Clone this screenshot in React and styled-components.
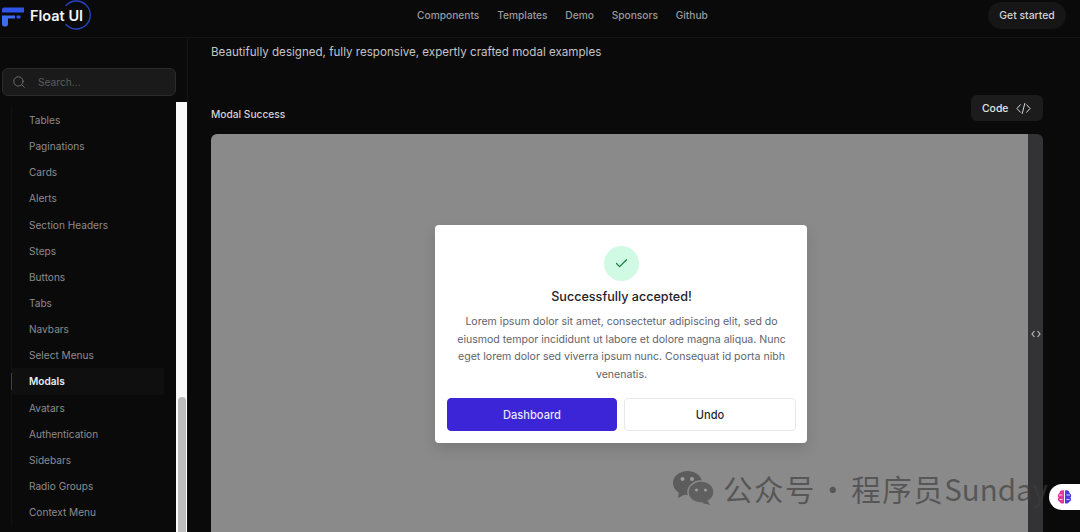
import React from "react";
import styled, { createGlobalStyle } from "styled-components";
import { Search, Check } from "lucide-react";

const GlobalStyle = createGlobalStyle`
  html, body {
    margin: 0;
    padding: 0;
    background: #0a0a0b;
  }
  * {
    box-sizing: border-box;
  }
`;

const Page = styled.div`
  position: relative;
  width: 1080px;
  height: 532px;
  overflow: hidden;
  background: #0a0a0b;
  font-family: Inter, "Liberation Sans", sans-serif;
`;

const Header = styled.header`
  display: grid;
  grid-template-columns: 200px 1fr 200px;
  align-items: start;
  height: 38px;
  padding-right: 14px;
  border-bottom: 1px solid #141415;
`;

const Brand = styled.div`
  position: relative;
  display: flex;
  align-items: center;
  gap: 5px;
  height: 31px;
  padding-left: 2px;
`;

const BrandName = styled.span`
  font-size: 14.5px;
  font-weight: 600;
  color: #f4f4f4;
`;

const BrandRing = styled.svg`
  position: absolute;
  left: 62px;
  top: -1px;
`;

const Nav = styled.nav`
  display: flex;
  justify-content: center;
  gap: 17.8px;
  height: 30px;
  align-items: center;
  padding-left: 59px;
`;

const NavLink = styled.span`
  font-size: 10.2px;
  font-weight: 500;
  color: #9a9a9c;
`;

const GetStarted = styled.div`
  justify-self: end;
  display: flex;
  align-items: center;
  justify-content: center;
  width: 78px;
  height: 27px;
  margin-top: 2px;
  border-radius: 14px;
  background: #161617;
  font-size: 10.4px;
  font-weight: 500;
  color: #d4d4d4;
`;

const Body = styled.div`
  display: flex;
  height: 494px;
`;

const Sidebar = styled.aside`
  position: relative;
  display: flex;
  flex-direction: column;
  width: 176px;
  flex: none;
  padding-top: 30px;
`;

const SearchBox = styled.div`
  display: flex;
  align-items: center;
  gap: 12px;
  height: 28px;
  margin-left: 2px;
  padding-left: 9px;
  border: 1px solid #2b2b2d;
  border-radius: 6px;
  background: #1a1a1b;
  font-size: 10.2px;
  color: #5c5c5e;
`;

const SideList = styled.ul`
  list-style: none;
  margin: 11px 0 0 11px;
  padding: 0;
  border-left: 1px solid #111112;
`;

const SideItem = styled.li`
  position: relative;
  display: flex;
  align-items: center;
  height: 26.15px;
  margin-right: 12px;
  padding-left: 17px;
  font-size: 10.1px;
  font-weight: ${(p) => (p.$active ? 600 : 400)};
  color: ${(p) => (p.$active ? "#ececec" : "#8c8c8c")};
  background: ${(p) => (p.$active ? "#0f0f10" : "transparent")};

  &::before {
    content: "";
    display: ${(p) => (p.$active ? "block" : "none")};
    position: absolute;
    left: -1px;
    top: 5px;
    bottom: 5px;
    width: 1px;
    background: #3a2bb8;
  }
`;

const ScrollTrack = styled.div`
  flex: none;
  width: 11px;
  height: 430px;
  margin-top: 64px;
  padding: 295px 1px 0 2px;
  background: #fafafa;
`;

const ScrollThumb = styled.div`
  height: 100%;
  border-radius: 4px 4px 0 0;
  background: #bdbdbd;
`;

const Main = styled.main`
  flex: 1;
  min-width: 0;
  padding: 7px 37px 0 23px;
  border-left: 1px solid #141415;
`;

const Lead = styled.p`
  margin: 0;
  font-size: 11.6px;
  line-height: 15px;
  color: #c4c4c6;
`;

const SectionBar = styled.div`
  display: flex;
  justify-content: space-between;
  align-items: flex-end;
  height: 26px;
  margin-top: 35px;
`;

const SectionTitle = styled.h3`
  margin: 0;
  font-size: 10.2px;
  line-height: 14px;
  font-weight: 500;
  color: #d4d4d6;
`;

const CodeButton = styled.div`
  display: flex;
  align-items: center;
  gap: 8px;
  height: 26px;
  width: 72px;
  padding-left: 11px;
  border-radius: 6px;
  background: #1c1c1d;
  font-size: 10.4px;
  font-weight: 500;
  color: #e4e4e4;
`;

const Preview = styled.div`
  display: flex;
  height: 400px;
  margin-top: 13px;
  border-radius: 6px 6px 0 0;
  overflow: hidden;
`;

const Stage = styled.div`
  flex: 1;
  display: flex;
  align-items: center;
  justify-content: center;
  padding-left: 3px;
  background: #8a8a8a;
`;

const Handle = styled.div`
  flex: none;
  display: flex;
  align-items: center;
  justify-content: center;
  width: 15px;
  background: #333335;
  color: #c4c4c4;
`;

const Modal = styled.div`
  width: 372px;
  height: 218px;
  padding: 21px 11px 0 12px;
  border-radius: 4px;
  background: #fff;
  box-shadow: 0 6px 14px rgba(0, 0, 0, 0.12);
  text-align: center;
`;

const IconCircle = styled.div`
  display: flex;
  align-items: center;
  justify-content: center;
  width: 35px;
  height: 35px;
  margin: 0 auto;
  border-radius: 50%;
  background: #d1fae5;
  color: #16803d;
`;

const ModalTitle = styled.h4`
  margin: 7px 0 0;
  font-size: 12.6px;
  line-height: 17px;
  font-weight: 500;
  color: #1f2329;
`;

const ModalText = styled.p`
  margin: 8px 0 0;
  font-size: 10.55px;
  line-height: 17.6px;
  color: #5f636b;
`;

const Actions = styled.div`
  display: grid;
  grid-template-columns: 170px 172px;
  gap: 7px;
  margin-top: 15px;
`;

const ActionButton = styled.div`
  display: flex;
  align-items: center;
  justify-content: center;
  height: 33px;
  border-radius: 4px;
  border: 1px solid ${(p) => (p.$primary ? "#3b25d6" : "#e8e8ea")};
  background: ${(p) => (p.$primary ? "#3b25d6" : "#fff")};
  color: ${(p) => (p.$primary ? "#e8e6fb" : "#26282c")};
  font-size: 11.1px;
  font-weight: 450;
`;

const Watermark = styled.div`
  position: absolute;
  left: 672px;
  top: 468px;
  display: flex;
  align-items: center;
  gap: 7px;
  color: rgba(60, 60, 60, 0.66);
  font-family: "Noto Sans CJK SC", "Noto Sans", sans-serif;
  font-size: 29.5px;
  line-height: 40px;
  letter-spacing: 1.5px;
  word-spacing: -6px;
  white-space: nowrap;
`;

const WatermarkLatin = styled.span`
  letter-spacing: 0;
`;

const BrainBadge = styled.div`
  position: absolute;
  right: 0;
  top: 484px;
  display: flex;
  align-items: center;
  justify-content: center;
  width: 31px;
  height: 26px;
  border-radius: 13px 0 0 13px;
  background: #fff;
`;

const navItems = ["Components", "Templates", "Demo", "Sponsors", "Github"];
const sideItems = [
  "Tables",
  "Paginations",
  "Cards",
  "Alerts",
  "Section Headers",
  "Steps",
  "Buttons",
  "Tabs",
  "Navbars",
  "Select Menus",
  "Modals",
  "Avatars",
  "Authentication",
  "Sidebars",
  "Radio Groups",
  "Context Menu",
];

const CodeIcon = ({ size, width }) => (
  <svg width={size} height={size} viewBox="0 0 24 24" fill="none" stroke="currentColor" strokeWidth={width} strokeLinecap="round" strokeLinejoin="round">
    <path d="M7 6 1.5 12 7 18" />
    <path d="M17 6l5.5 6-5.5 6" />
    <path d="M14 4 10 20" />
  </svg>
);

const SmallCode = () => (
  <svg width="10" height="8" viewBox="0 0 10 8" fill="none" stroke="currentColor" strokeWidth="1.1">
    <path d="M3.4 1 1 4l2.4 3" />
    <path d="M6.6 1 9 4 6.6 7" />
  </svg>
);

const Logo = () => (
  <svg width="23" height="22" viewBox="0 0 23 22">
    <path d="M0 4.5a2 2 0 0 1 2-2H22v5H0z" fill="#2f55e8" />
    <path d="M0 10.5h13v3H6v5.500a2.500 2.500 0 0 1-2.500 2.500h-1A2.500 2.500 0 0 1 0 19z" fill="#3f6bf2" />
    <rect x="14.500" y="10.500" width="4" height="3" rx="1" fill="#2f55e8" />
  </svg>
);

const WeChat = () => (
  <svg width="44" height="36" viewBox="0 0 44 36">
    <ellipse cx="15.500" cy="13" rx="14.500" ry="12" fill="#5c5c5c" />
    <path d="M7 21l-1 7 8-4z" fill="#5c5c5c" />
    <ellipse cx="29" cy="22" rx="13" ry="11" fill="#5f5f5f" stroke="#8a8a8a" strokeWidth="1.500" />
    <path d="M35 30l3 5-8-2z" fill="#5f5f5f" />
    <circle cx="10.500" cy="9" r="2" fill="#9c9c9c" />
    <circle cx="20" cy="9" r="2" fill="#9c9c9c" />
    <circle cx="24.500" cy="20" r="1.600" fill="#9c9c9c" />
    <circle cx="33.500" cy="20" r="1.600" fill="#9c9c9c" />
  </svg>
);

const Brain = () => (
  <svg width="15" height="16" viewBox="0 0 15 16">
    <path d="M7 1.500C4 .8 2.500 2.500 2.500 4 .6 5 .4 7.500 1.500 8.500.4 10 1 12.500 3 13c.6 1.500 2.500 2 4 1.200z" fill="#e0359e" />
    <path d="M8 1.500c3-.7 4.500 1 4.500 2.500 1.900 1 2.100 3.500 1 4.500 1.100 1.500.5 4-1.500 4.500-.6 1.500-2.500 2-4 1.200z" fill="#4a3be0" />
    <path d="M2 6h3.500M2.500 10.500H5.500M9.500 6H13M9.500 10.500H12.500" stroke="#fff" strokeWidth=".8" />
  </svg>
);

export default function App() {
  return (
    <Page>
      <GlobalStyle />
      <Header>
        <Brand>
          <Logo />
          <BrandName>Float UI</BrandName>
          <BrandRing width="30" height="32" viewBox="0 0 30 32" fill="none">
            <path d="M4 6.500A14 14 0 1 1 4 25.500" stroke="#2744c4" strokeWidth="1.300" strokeLinecap="round" />
          </BrandRing>
        </Brand>
        <Nav>
          {navItems.map((item) => (
            <NavLink key={item}>{item}</NavLink>
          ))}
        </Nav>
        <GetStarted>Get started</GetStarted>
      </Header>
      <Body>
        <Sidebar>
          <SearchBox>
            <Search size={14} color="#77777a" strokeWidth={1.500} />
            Search...
          </SearchBox>
          <SideList>
            {sideItems.map((item) => (
              <SideItem key={item} $active={item === "Modals"}>
                {item}
              </SideItem>
            ))}
          </SideList>
        </Sidebar>
        <ScrollTrack>
          <ScrollThumb />
        </ScrollTrack>
        <Main>
          <Lead>Beautifully designed, fully responsive, expertly crafted modal examples</Lead>
          <SectionBar>
            <SectionTitle>Modal Success</SectionTitle>
            <CodeButton>
              Code
              <CodeIcon size={15} width={1.500} />
            </CodeButton>
          </SectionBar>
          <Preview>
            <Stage>
              <Modal>
                <IconCircle>
                  <Check size={15} strokeWidth={2} />
                </IconCircle>
                <ModalTitle>Successfully accepted!</ModalTitle>
                <ModalText>
                  Lorem ipsum dolor sit amet, consectetur adipiscing elit, sed do eiusmod tempor incididunt ut labore et dolore magna aliqua. Nunc eget lorem dolor sed viverra ipsum nunc. Consequat id porta nibh venenatis.
                </ModalText>
                <Actions>
                  <ActionButton $primary>Dashboard</ActionButton>
                  <ActionButton>Undo</ActionButton>
                </Actions>
              </Modal>
            </Stage>
            <Handle>
              <SmallCode />
            </Handle>
          </Preview>
        </Main>
      </Body>
      <Watermark>
        <WeChat />
        <span>
          公众号 · 程序员<WatermarkLatin>Sunday</WatermarkLatin>
        </span>
      </Watermark>
      <BrainBadge>
        <Brain />
      </BrainBadge>
    </Page>
  );
}
